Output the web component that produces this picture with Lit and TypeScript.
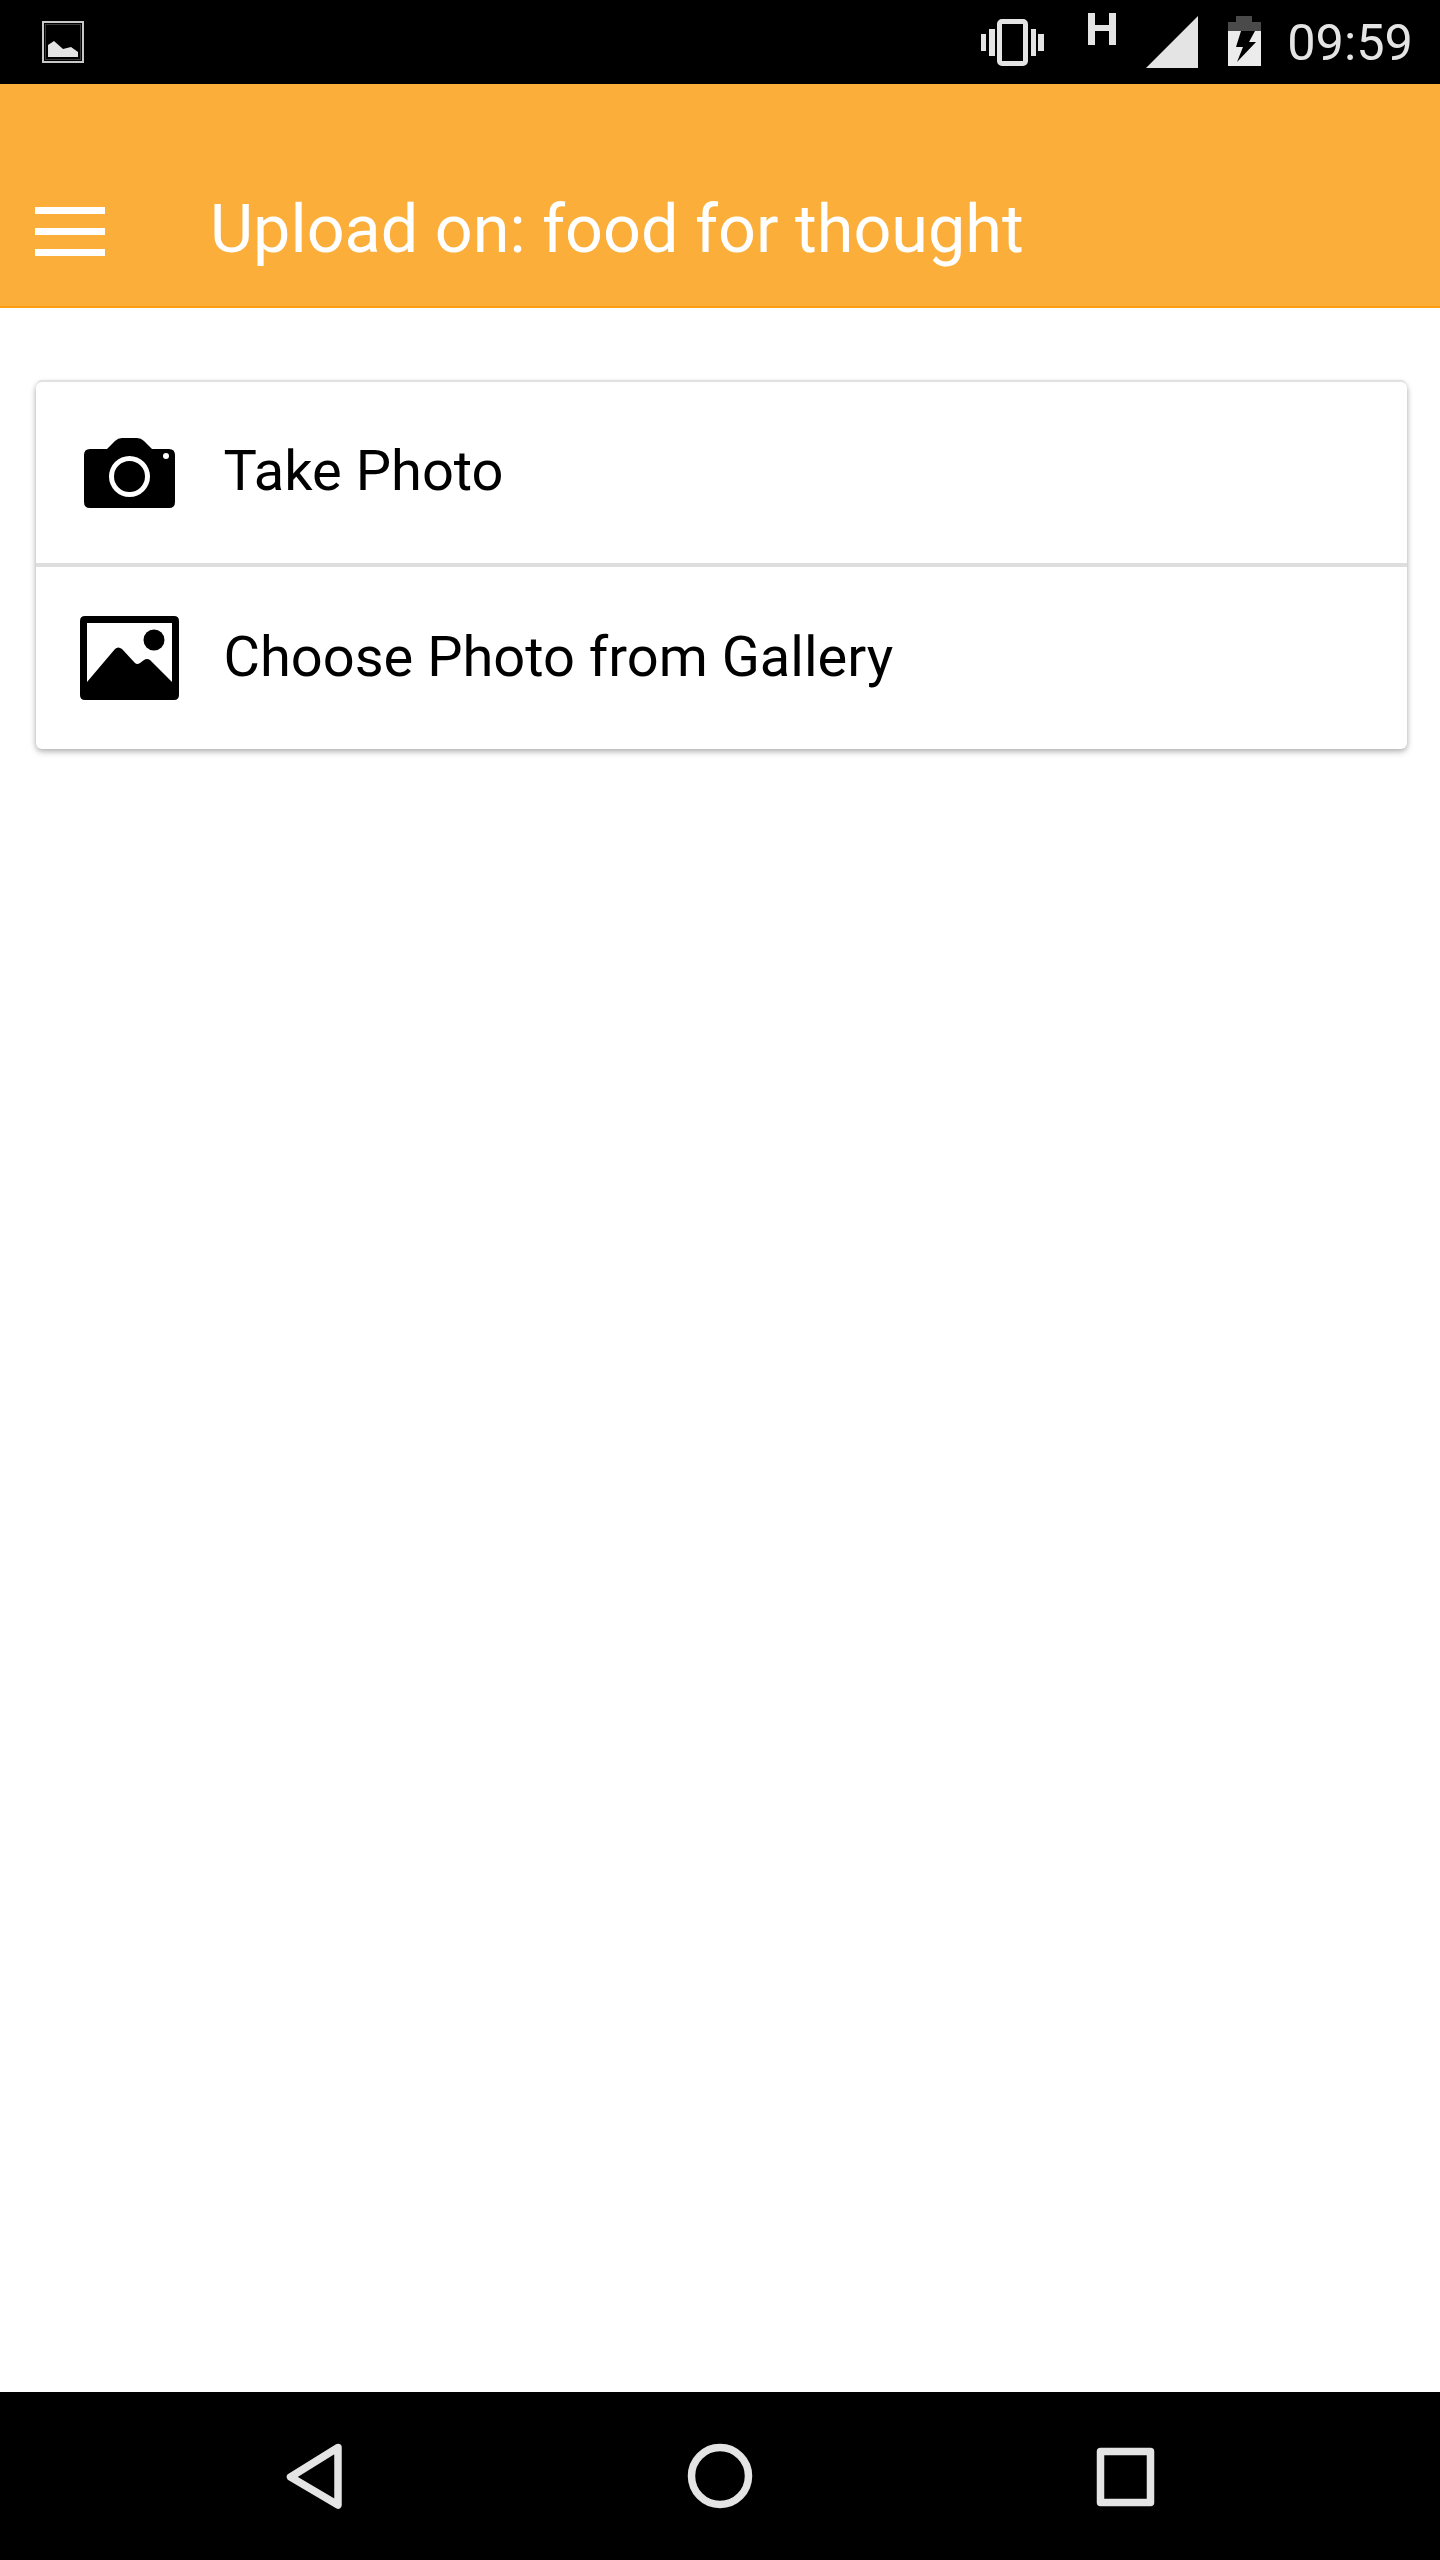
import { LitElement, html, css } from "lit";
import { customElement } from "lit/decorators.js";

@customElement("app-root")
export class AppRoot extends LitElement {
  static styles = css`
    :host { display: flex; flex-direction: column; width: 1440px; height: 2560px; background: #fff; font-family: Roboto, sans-serif; overflow: hidden; }
    svg { display: block; flex: none; }
    .status { height: 84px; background: #000; display: flex; align-items: flex-start; color: #e4e4e4; flex: none; }
    .notif { margin: 21px 0 0 42px; }
    .spacer { flex: 1; }
    .vib { margin: 19px 0 0 0; }
    .h { margin: 13px 0 0 44px; }
    .sig { margin: 16px 0 0 30px; }
    .bat { margin: 16px 0 0 30px; }
    .time { margin: 13px 27px 0 26px; font-size: 50.5px; line-height: 60px; color: #e4e4e4; }
    .bar { height: 224px; box-sizing: border-box; background: #fbae39; border-bottom: 2px solid #fd9f12; display: flex; align-items: flex-start; color: #fff; flex: none; }
    .menu { margin: 123px 0 0 35px; }
    .title { margin: 103px 0 0 105px; font-size: 66.5px; line-height: 84px; white-space: nowrap; }
    .content { flex: 1; padding: 74px 33px 0 36px; }
    .card { background: #fff; border-radius: 6px; box-shadow: 0 -3px 1px -1px #e0e0e0, 0 3px 6px rgba(0,0,0,.26), 0 0 5px rgba(0,0,0,.12); }
    .row { height: 181px; display: flex; align-items: center; color: #000; font-size: 56px; }
    .row + .row { border-top: 4px solid #dedede; height: 182px; }
    .ico { width: 187px; display: flex; justify-content: center; flex: none; margin-right: 0.5px; }
    .label { white-space: nowrap; margin-top: -3px; }
    .nav { height: 168px; background: #000; flex: none; }
  `;

  render() {
    return html`
      <div class="status">
        <svg class="notif" width="42" height="42" viewBox="0 0 42 42">
          <rect x="1" y="1" width="40" height="40" fill="none" stroke="#c8c8c8" stroke-width="2"/>
          <rect x="3" y="3" width="36" height="36" fill="#000"/>
          <path d="M6 36 V24 L12 20 L21 28 L29 26 L36 31 V36 Z" fill="#e4e4e4"/>
          <rect x="3.500" y="3.500" width="35" height="35" fill="none" stroke="#3a3a3a" stroke-width="1"/>
        </svg>
        <div class="spacer"></div>
        <svg class="vib" width="63" height="47" viewBox="0 0 63 47" fill="#e4e4e4">
          <rect x="0" y="15" width="5" height="17"/>
          <rect x="8" y="10" width="6" height="27"/>
          <path fill-rule="evenodd" d="M21 0 H42 a5 5 0 0 1 5 5 V42 a5 5 0 0 1 -5 5 H21 a5 5 0 0 1 -5 -5 V5 a5 5 0 0 1 5 -5 Z M21 5 V42 H42 V5 Z"/>
          <rect x="50" y="10" width="5" height="27"/>
          <rect x="57" y="15" width="6" height="17"/>
        </svg>
        <svg class="h" width="28" height="32" viewBox="0 0 28 32" fill="#e4e4e4">
          <path d="M0 0 H7 V12 H21 V0 H28 V32 H21 V18 H7 V32 H0 Z"/>
        </svg>
        <svg class="sig" width="52" height="52" viewBox="0 0 52 52"><path d="M52 0 V52 H0 Z" fill="#e4e4e4"/></svg>
        <svg class="bat" width="33" height="50" viewBox="0 0 33 50">
          <path d="M8 0 H24 V6 H33 V15 H0 V6 H8 Z" fill="#4a4a4a"/>
          <path d="M0 15 H33 V50 H0 Z" fill="#ececec"/>
          <path d="M13 15 H27 L21 26 H28 L9 46 L15 31 H8 Z" fill="#000"/>
        </svg>
        <div class="time">09:59</div>
      </div>
      <div class="bar">
        <svg class="menu" width="70" height="49" viewBox="0 0 70 49" fill="#fff">
          <rect y="0" width="70" height="7"/><rect y="21" width="70" height="7"/><rect y="42" width="70" height="7"/>
        </svg>
        <div class="title">Upload on: food for thought</div>
      </div>
      <div class="content">
        <div class="card">
          <div class="row">
            <div class="ico">
              <svg width="91" height="70" viewBox="0 0 91 70">
                <path fill-rule="evenodd" d="M6 11 H23 L31 3 Q34 0 38 0 H53 Q57 0 60 3 L68 11 H85 Q91 11 91 17 V64 Q91 70 85 70 H6 Q0 70 0 64 V17 Q0 11 6 11 Z M45.500 18 A20.500 20.500 0 1 0 45.500 59 A20.500 20.500 0 1 0 45.500 18 Z M45.500 23 A15.500 15.500 0 1 1 45.500 54 A15.500 15.500 0 1 1 45.500 23 Z M82 15 A3 3 0 1 0 82 21 A3 3 0 1 0 82 15 Z"/>
              </svg>
            </div>
            <div class="label">Take Photo</div>
          </div>
          <div class="row">
            <div class="ico">
              <svg width="99" height="84" viewBox="0 0 99 84">
                <path fill-rule="evenodd" d="M5 0 H94 Q99 0 99 5 V79 Q99 84 94 84 H5 Q0 84 0 79 V5 Q0 0 5 0 Z M7 7 V66 L35 33 Q38 30 42 33 L55 47 Q57 49 60 47 L64 44 Q67 42 70 44 L92 66 V7 Z"/>
                <circle cx="74" cy="24" r="10.500"/>
              </svg>
            </div>
            <div class="label">Choose Photo from Gallery</div>
          </div>
        </div>
      </div>
      <div class="nav">
        <svg width="1440" height="168" viewBox="0 0 1440 168" fill="none" stroke="#e4e4e4" stroke-width="7.500" stroke-linejoin="round">
          <path d="M338 55.500 L290.500 85 L338 113 Z" />
          <circle cx="720" cy="84" r="28.500"/>
          <rect x="1100.500" y="59.500" width="50" height="51"/>
        </svg>
      </div>
    `;
  }
}
